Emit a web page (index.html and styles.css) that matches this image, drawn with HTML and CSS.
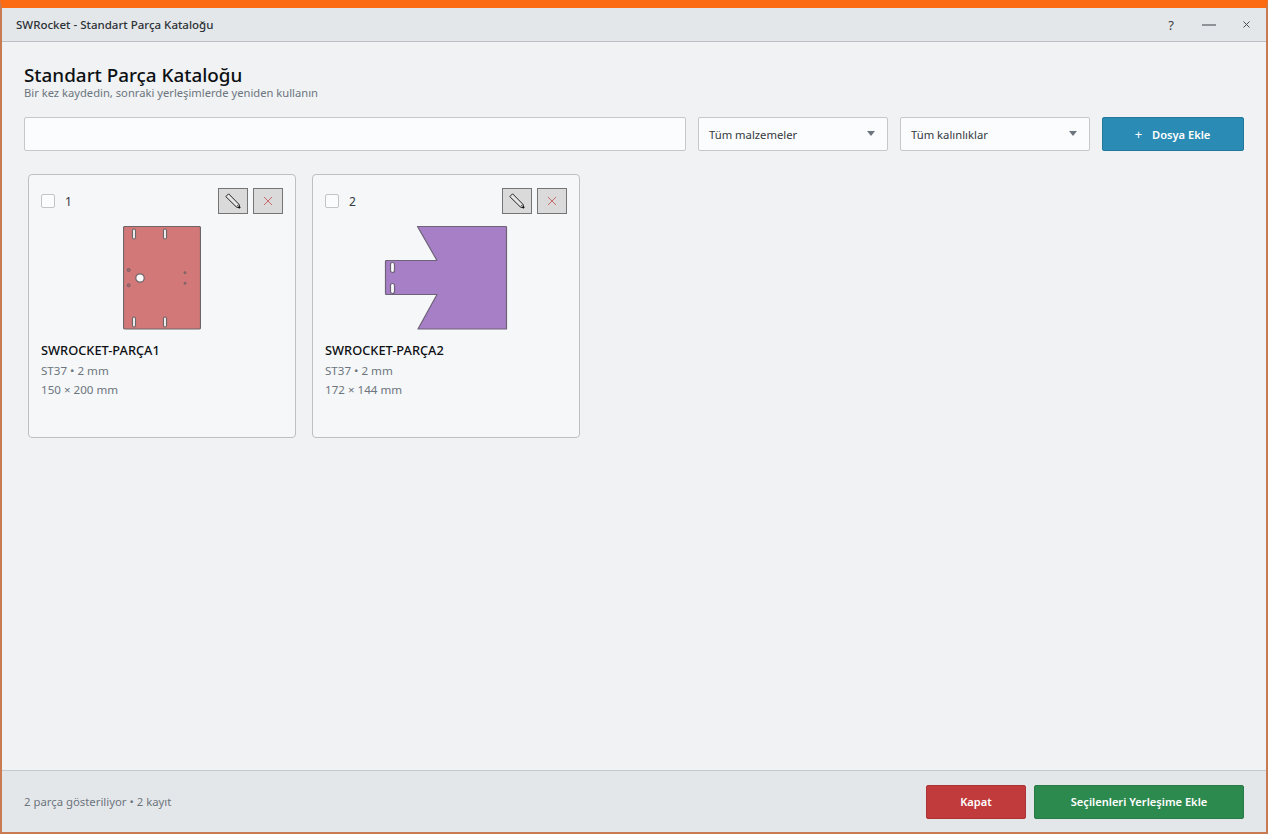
FILE: index.html
```html
<!DOCTYPE html>
<html lang="tr">
<head>
<meta charset="utf-8">
<title>SWRocket - Standart Parça Kataloğu</title>
<link rel="stylesheet" href="styles.css">
</head>
<body>
<div class="window">
  <div class="titlebar">
    <span class="title">SWRocket - Standart Parça Kataloğu</span>
    <div class="win-controls">
      <span class="wc wc-help">?</span>
      <span class="wc wc-min"><svg width="14" height="2" viewBox="0 0 14 2"><rect width="14" height="1" y="0.5" fill="#3a3f44"/></svg></span>
      <span class="wc wc-close"><svg width="7" height="7" viewBox="0 0 7 7"><path d="M.5.5l6 6M6.500.5l-6 6" stroke="#4a4f55" stroke-width="1" fill="none"/></svg></span>
    </div>
  </div>
  <main class="content">
    <h1 class="heading">Standart Parça Kataloğu</h1>
    <p class="subheading">Bir kez kaydedin, sonraki yerleşimlerde yeniden kullanın</p>
    <div class="toolbar">
      <div class="search"></div>
      <div class="select"><span>Tüm malzemeler</span><i class="caret"></i></div>
      <div class="select"><span>Tüm kalınlıklar</span><i class="caret"></i></div>
      <button class="btn btn-add"><span class="plus">+</span><span>Dosya Ekle</span></button>
    </div>
    <div class="cards">
      <article class="card">
        <div class="card-top">
          <span class="check"></span><span class="num">1</span>
          <div class="card-actions">
            <span class="icon-btn"><svg width="16" height="16" viewBox="0 0 16 16"><path d="M3.600.8L.8 3.600 11.400 14l3.600 1-1-3.600z" fill="#e6e6e6" stroke="#222" stroke-width="1" stroke-linejoin="round"/><path d="M13 14.400l2 .6-.6-2z" fill="#111" stroke="#111" stroke-width=".6"/><path d="M11.800 13.300l1.800-1.800" stroke="#222" stroke-width=".8" fill="none"/></svg></span>
            <span class="icon-btn"><svg width="10" height="10" viewBox="0 0 10 10"><path d="M1 1l8 8M9 1l-8 8" stroke="#c96a6a" stroke-width="1" fill="none"/></svg></span>
          </div>
        </div>
        <div class="preview">
          <svg width="78" height="104" viewBox="0 0 78 104">
            <rect x="0.500" y="0.500" width="77" height="102.500" rx="1.500" fill="#d27878" stroke="#6f6468" stroke-width="1.200"/>
            <g fill="#fbfbfc" stroke="#6f6468" stroke-width="1.200">
              <rect x="9.500" y="3" width="3" height="10" rx="1.500"/>
              <rect x="40.500" y="3" width="3" height="10" rx="1.500"/>
              <rect x="9.500" y="91" width="3" height="10" rx="1.500"/>
              <rect x="40.500" y="91" width="3" height="10" rx="1.500"/>
              <circle cx="17" cy="52" r="4.200"/>
            </g>
            <g fill="#b66468" stroke="#6f6468" stroke-width="1">
              <circle cx="5.700" cy="44" r="1.500"/>
              <circle cx="5.700" cy="59.300" r="1.500"/>
              <circle cx="62" cy="46.700" r="1"/>
              <circle cx="62" cy="57.300" r="1"/>
            </g>
          </svg>
        </div>
        <h2 class="part-name">SWROCKET-PARÇA1</h2>
        <p class="meta">ST37 • 2 mm</p>
        <p class="meta">150 × 200 mm</p>
      </article>
      <article class="card">
        <div class="card-top">
          <span class="check"></span><span class="num">2</span>
          <div class="card-actions">
            <span class="icon-btn"><svg width="16" height="16" viewBox="0 0 16 16"><path d="M3.600.8L.8 3.600 11.400 14l3.600 1-1-3.600z" fill="#e6e6e6" stroke="#222" stroke-width="1" stroke-linejoin="round"/><path d="M13 14.400l2 .6-.6-2z" fill="#111" stroke="#111" stroke-width=".6"/><path d="M11.800 13.300l1.800-1.800" stroke="#222" stroke-width=".8" fill="none"/></svg></span>
            <span class="icon-btn"><svg width="10" height="10" viewBox="0 0 10 10"><path d="M1 1l8 8M9 1l-8 8" stroke="#c96a6a" stroke-width="1" fill="none"/></svg></span>
          </div>
        </div>
        <div class="preview">
          <svg width="124" height="104" viewBox="0 0 124 104">
            <path d="M33.500.5H121.500a1 1 0 0 1 1 1V103H34L53 68.500H2.500a1 1 0 0 1-1-1V35.500a1 1 0 0 1 1-1H53z" fill="#a77fc6" stroke="#6d6277" stroke-width="1.200" stroke-linejoin="round"/>
            <g fill="#fbfbfc" stroke="#6d6277" stroke-width="1.200">
              <rect x="6.500" y="36.500" width="4" height="10" rx="2"/>
              <rect x="6.500" y="57.500" width="4" height="10" rx="2"/>
            </g>
          </svg>
        </div>
        <h2 class="part-name">SWROCKET-PARÇA2</h2>
        <p class="meta">ST37 • 2 mm</p>
        <p class="meta">172 × 144 mm</p>
      </article>
    </div>
  </main>
  <footer class="footer">
    <span class="status">2 parça gösteriliyor • 2 kayıt</span>
    <div class="footer-actions">
      <button class="btn btn-close">Kapat</button>
      <button class="btn btn-add-layout">Seçilenleri Yerleşime Ekle</button>
    </div>
  </footer>
</div>
</body>
</html>
```
FILE: styles.css
```css
* { box-sizing: border-box; }
html, body { margin: 0; height: 100%; }
body {
  font-family: "Noto Sans", "Open Sans", sans-serif;
  color: #212529;
  background: #f0f2f4;
  overflow: hidden;
}
.window {
  width: 1268px;
  height: 834px;
  display: flex;
  flex-direction: column;
  border: 2px solid #c87b52;
  border-top: 8px solid #fc6a11;
  background: #f0f2f4;
}
.titlebar {
  height: 34px;
  flex: none;
  display: flex;
  align-items: center;
  justify-content: space-between;
  padding: 0 14px;
  background: #e4e7ea;
  border-bottom: 1px solid #bcc0c4;
}
.title { font-size: 11.500px; font-weight: 500; color: #2c3136; }
.win-controls { display: flex; align-items: center; }
.wc { display: flex; align-items: center; justify-content: center; color: #3a3f44; }
.wc-help { width: 14px; font-size: 13px; margin-right: 24px; }
.wc-min { width: 14px; margin-right: 27px; }
.wc-close { width: 7px; margin-right: 2px; }
.content {
  flex: 1;
  min-height: 0;
  padding: 23px 22px 0;
  display: flex;
  flex-direction: column;
}
.heading {
  margin: 0;
  font-size: 18.850px;
  line-height: 20px;
  font-weight: 500;
  color: #0d1013;
}
.subheading {
  margin: 0;
  font-size: 11.200px;
  line-height: 15px;
  color: #6c757d;
}
.toolbar {
  display: flex;
  gap: 12px;
  margin-top: 17px;
  height: 34px;
}
.search {
  flex: 1;
  background: #fbfcfe;
  border: 1px solid #c4c8cc;
  border-radius: 2px;
}
.select {
  width: 190px;
  display: flex;
  align-items: center;
  justify-content: space-between;
  padding: 0 12px 0 10px;
  background: #fbfcfe;
  border: 1px solid #c4c8cc;
  border-radius: 2px;
  font-size: 11.250px;
  color: #343a40;
}
.caret {
  width: 0;
  height: 0;
  border-left: 4.500px solid transparent;
  border-right: 4.500px solid transparent;
  border-top: 5px solid #6c757d;
  margin-top: -2px;
}
.btn {
  font-family: inherit;
  font-weight: 600;
  font-size: 11.100px;
  color: #fff;
  border-radius: 2px;
  cursor: pointer;
  padding: 0;
}
.btn-add {
  width: 142px;
  display: flex;
  align-items: center;
  justify-content: center;
  gap: 10px;
  padding-right: 1px;
  background: #2a8cb4;
  border: 1px solid #24789b;
}
.plus { font-weight: 400; font-size: 13px; }
.cards {
  display: flex;
  gap: 16px;
  margin-top: 23px;
  padding-left: 4px;
}
.card {
  width: 268px;
  height: 264px;
  padding: 13px 12px 12px;
  background: #f6f7f9;
  border: 1px solid #bcc0c4;
  border-radius: 4px;
}
.card-top {
  display: flex;
  align-items: center;
  height: 26px;
}
.check {
  width: 14px;
  height: 14px;
  background: #fbfcfe;
  border: 1px solid #c0c5ca;
  border-radius: 2px;
}
.num { margin-left: 10px; font-size: 12px; color: #343a40; }
.card-actions { margin-left: auto; display: flex; gap: 5px; }
.icon-btn {
  width: 30px;
  height: 26px;
  display: flex;
  align-items: center;
  justify-content: center;
  background: #dadada;
  border: 1px solid #757575;
}
.preview {
  display: flex;
  justify-content: center;
  margin-top: 12px;
  height: 104px;
}
.part-name {
  margin: 11px 0 0;
  font-size: 12.800px;
  line-height: 18px;
  font-weight: 500;
  color: #0d1013;
}
.meta {
  margin: 4px 0 0;
  font-size: 11.600px;
  line-height: 15px;
  color: #6c757d;
}
.footer {
  height: 62px;
  flex: none;
  display: flex;
  align-items: center;
  justify-content: space-between;
  padding: 0 22px;
  background: #e4e7ea;
  border-top: 1px solid #c4c8cc;
}
.status { font-size: 11.350px; color: #6c757d; }
.footer-actions { display: flex; gap: 8px; }
.btn-close {
  width: 100px;
  height: 34px;
  background: #c13a3c;
  border: 1px solid #ab3335;
}
.btn-add-layout {
  width: 210px;
  height: 34px;
  background: #2d8a4f;
  border: 1px solid #287a46;
}
```
